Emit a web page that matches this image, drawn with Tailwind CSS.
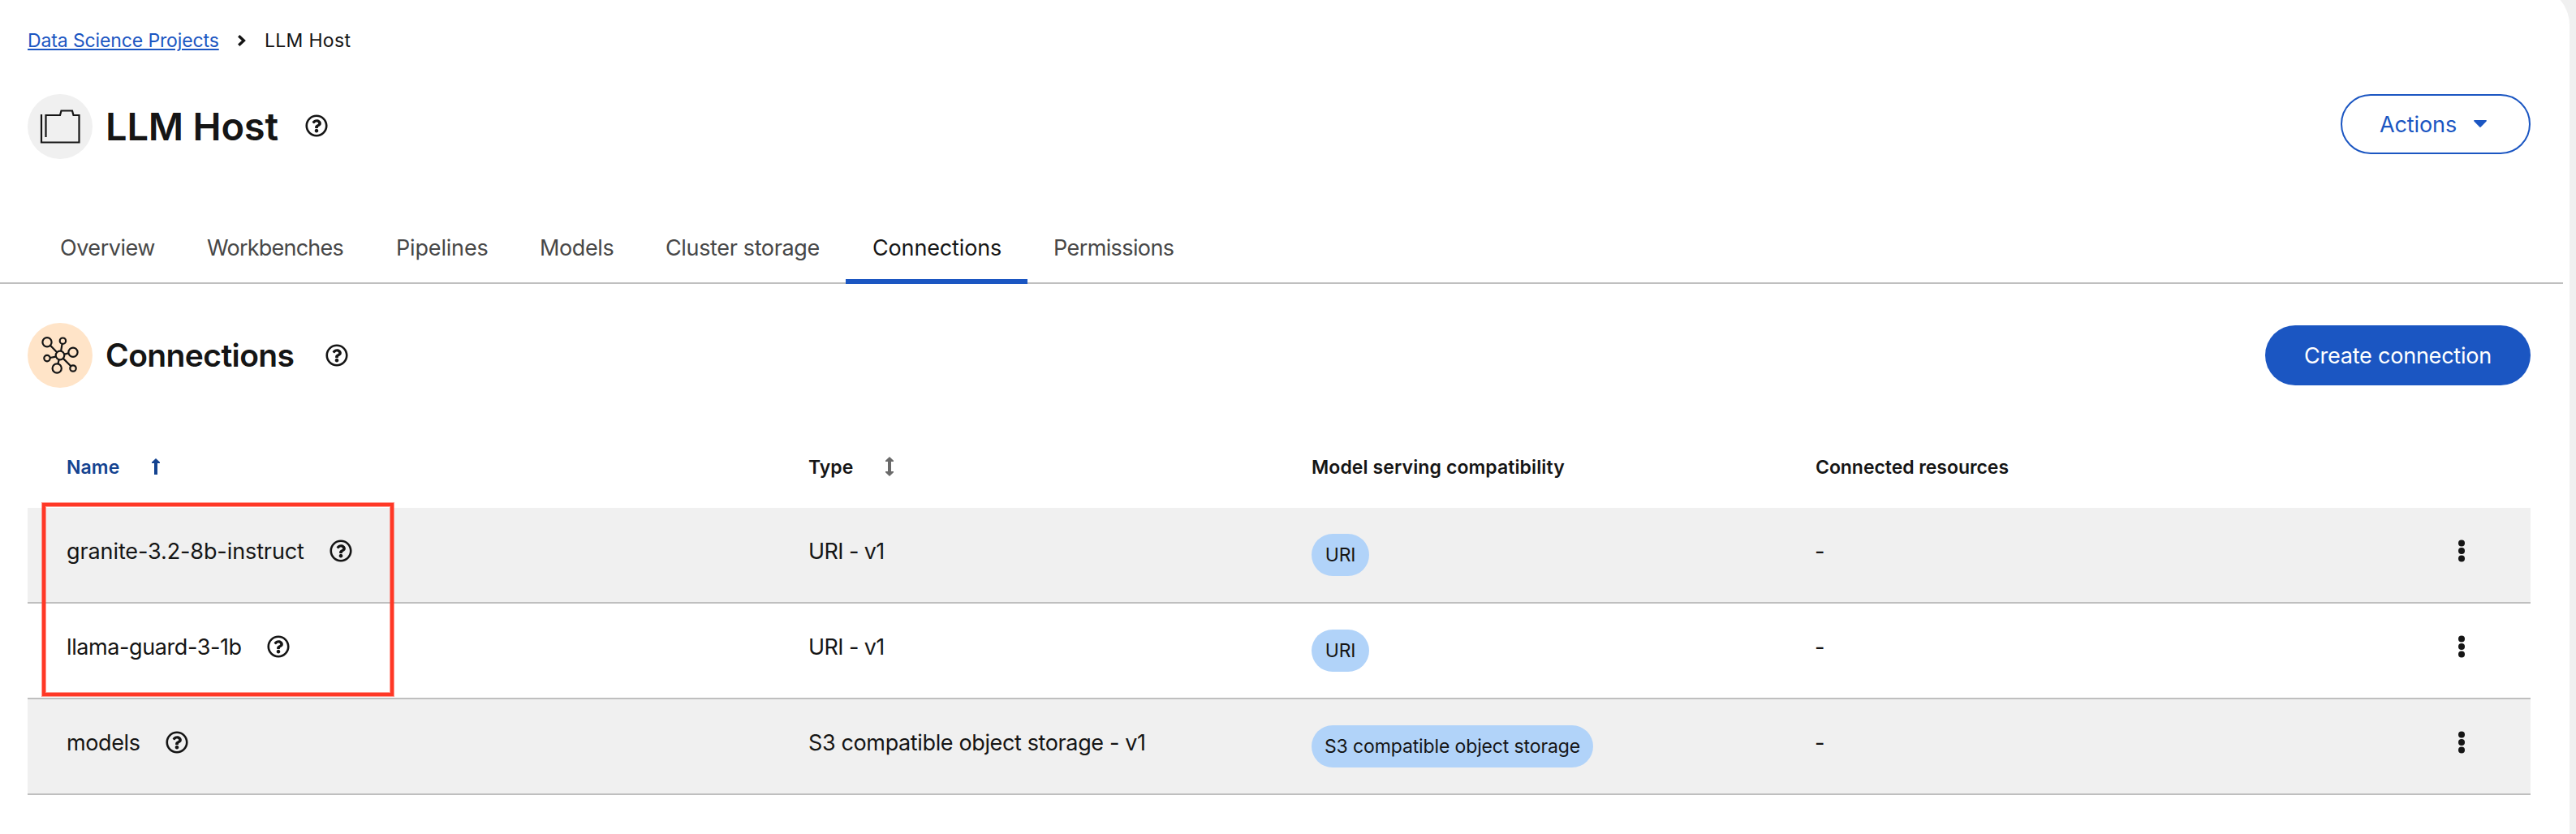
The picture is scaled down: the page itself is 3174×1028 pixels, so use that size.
<!DOCTYPE html>
<html lang="en">
<head>
<meta charset="utf-8">
<title>LLM Host - Connections</title>
<script src="https://cdn.jsdelivr.net/npm/@tailwindcss/browser@4"></script>
</head>
<body class="h-[1028px] overflow-hidden bg-[#f0f0f0] font-[Inter,sans-serif] text-[27px] text-[#151515]">
<svg class="hidden">
  <symbol id="help" viewBox="0 0 512 512"><path fill="currentColor" d="M256 8C119.043 8 8 119.083 8 256c0 136.997 111.043 248 248 248s248-111.003 248-248C504 119.083 392.957 8 256 8zm0 448c-110.532 0-200-89.431-200-200 0-110.495 89.472-200 200-200 110.491 0 200 89.471 200 200 0 110.53-89.431 200-200 200zm107.244-255.2c0 67.052-72.421 68.084-72.421 92.863V300c0 6.627-5.373 12-12 12h-45.647c-6.627 0-12-5.373-12-12v-8.659c0-35.745 27.1-50.034 47.579-61.516 17.561-9.845 28.324-16.541 28.324-29.579 0-17.246-21.999-28.693-39.784-28.693-23.189 0-33.894 10.977-48.942 29.969-4.057 5.12-11.46 6.071-16.666 2.124l-27.824-21.098c-5.107-3.872-6.251-11.066-2.644-16.363C184.846 131.491 214.94 112 261.794 112c49.071 0 101.45 38.304 101.45 88.8zM298 368c0 23.159-18.841 42-42 42s-42-18.841-42-42 18.841-42 42-42 42 18.841 42 42z"/></symbol>
  <symbol id="kebab" viewBox="0 0 8 28"><g fill="currentColor"><circle cx="4" cy="4.5" r="4"/><circle cx="4" cy="14" r="4"/><circle cx="4" cy="23.5" r="4"/></g></symbol>
</svg>
<main class="-mt-[17px] mr-2 h-[1045px] rounded-tr-[48px] bg-white pt-[17px]">
  <nav class="flex h-[68px] items-center pt-8 pl-[34px] text-[23px] whitespace-nowrap">
    <a class="w-[236px] tracking-[-0.125px] text-[#1b56c2] underline decoration-2 underline-offset-2">Data Science Projects</a>
    <svg class="ml-[22px] h-4 w-3" viewBox="0 0 12 16" fill="none" stroke="#151515" stroke-width="3.4"><path d="M2.2 2.2 8.4 8l-6.2 5.8"/></svg>
    <span class="ml-[22px] tracking-[0.3px]">LLM Host</span>
  </nav>

  <header class="mt-12 flex h-20 items-center pr-12 pl-[34px]">
    <svg class="size-20 rounded-full bg-[#f0f0f0]" viewBox="0 0 80 80" fill="none" stroke="#151515" stroke-width="2.2"><path d="M17 25V59.5H63.5V26H56.5L55 20.5H41.5L40 26H22.5V53"/></svg>
    <h1 class="ml-4 w-[246px] text-[47px] font-[570] tracking-[-0.2px] whitespace-nowrap">LLM Host</h1>
    <svg class="mb-0.5 size-7"><use href="#help"/></svg>
    <button class="ml-auto flex h-[74px] w-[234px] items-center self-start rounded-full border-2 border-[#1b56c2] pl-[46px] text-[#1b56c2]"><span class="w-[116px] pt-0.5 text-left tracking-[-0.1px]">Actions</span><svg class="h-[10px] w-4" viewBox="0 0 16 10"><path fill="currentColor" d="M.8 0h14.4q1.2.4.2 1.7L8.8 8.6q-.8.8-1.6 0L.6 1.7Q-.4.4.8 0z"/></svg></button>
  </header>

  <div class="mt-16 mr-2 flex h-[90px] items-center pl-[42px] text-[#474747] whitespace-nowrap shadow-[inset_0_-2px_0_#bfbfbf]">
    <a class="w-[181px] pt-0.5 pl-8 tracking-[-0.46px]">Overview</a>
    <a class="w-[233px] pt-0.5 pl-8 tracking-[-0.77px]">Workbenches</a>
    <a class="w-[177px] pt-0.5 pl-8 tracking-[-0.17px]">Pipelines</a>
    <a class="w-[155px] pt-0.5 pl-8 tracking-[-0.4px]">Models</a>
    <a class="w-[254px] pt-0.5 pl-8 tracking-[-0.35px]">Cluster storage</a>
    <a class="flex h-full w-[224px] items-center pt-0.5 pl-[33px] tracking-[-0.15px] text-[#151515] shadow-[inset_0_-6px_0_#1b56c2]">Connections</a>
    <a class="pt-0.5 pl-8 tracking-[-0.6px]">Permissions</a>
  </div>

  <section class="flex h-32 items-center pt-12 pr-12 pl-[34px]">
    <svg class="size-20 rounded-full bg-[#ffe4c8]" viewBox="0 0 80 80" fill="none" stroke="#151515" stroke-width="2.2"><circle cx="40" cy="40" r="5.3"/><circle cx="24" cy="23.8" r="5.6"/><circle cx="43.4" cy="22.2" r="3.7"/><circle cx="56" cy="36.3" r="5.6"/><circle cx="24" cy="43.6" r="3.7"/><circle cx="36.2" cy="56" r="5.6"/><circle cx="56" cy="56" r="3.7"/><path d="m28 27.8 8.2 8.4M42.6 26l-1.5 8.8m4.2 3.8 5.2-1.2M27.7 43l7.1-1.4m3.8 3.6-1.1 5.2m6.4-6.500 9.400 9.400"/></svg>
    <h2 class="ml-4 w-[271px] text-[39px] font-[570] tracking-[-0.6px]">Connections</h2>
    <svg class="size-7"><use href="#help"/></svg>
    <button class="ml-auto h-[74px] w-[327px] rounded-full bg-[#1b56c2] pt-0.5 tracking-[-0.22px] text-white">Create connection</button>
  </section>

  <div class="relative mt-[46px] mr-12 ml-[34px] whitespace-nowrap">
    <div class="grid h-[102px] grid-cols-[946px_620px_620px_1fr_170px] items-center text-[23px] font-semibold">
      <div class="flex items-center pl-12 text-[#144390]"><span class="w-[105px] pt-0.5 tracking-[0.1px]">Name</span><svg class="h-5 w-[10px]" viewBox="0 0 10 20"><path fill="currentColor" d="M5 0 10 4.8V6H7v14H3V6H0V4.800z"/></svg></div>
      <div class="flex items-center pl-4"><span class="w-[95px] pt-0.5">Type</span><svg class="h-6 w-[10px] text-[#6a6a6a]" viewBox="0 0 10 24"><path fill="currentColor" d="M5 0 10 4.800V6H7v12h3v1.200L5 24 0 19.200V18H3V6H0V4.800z"/></svg></div>
      <div class="pt-0.5 pl-4 tracking-[0.1px]">Model serving compatibility</div>
      <div class="pt-0.5 pl-[17px] tracking-[-0.05px]">Connected resources</div>
    </div>
    <div class="grid h-[118px] grid-cols-[946px_620px_620px_1fr_170px] items-center border-b-2 border-[#bfbfbf] bg-[#f0f0f0]">
      <div class="flex items-center pb-[10px] pl-12"><span class="w-[324px] pt-0.5 tracking-[-0.1px]">granite-3.2-8b-instruct</span><svg class="size-7"><use href="#help"/></svg></div>
      <div class="pb-2 pl-4 tracking-[-0.6px]">URI - v1</div>
      <div class="pl-4"><span class="flex h-[52px] w-[71px] items-center justify-center rounded-full bg-[#b1d3f9] text-[23px] tracking-[-0.2px]">URI</span></div>
      <div class="pb-2 pl-4">-</div>
      <svg class="mb-[10px] h-7 w-2 justify-self-center"><use href="#kebab"/></svg>
    </div>
    <div class="grid h-[118px] grid-cols-[946px_620px_620px_1fr_170px] items-center border-b-2 border-[#bfbfbf]">
      <div class="flex items-center pb-[10px] pl-12"><span class="w-[247px] pt-0.5 tracking-[-0.4px]">llama-guard-3-1b</span><svg class="size-7"><use href="#help"/></svg></div>
      <div class="pb-2 pl-4 tracking-[-0.6px]">URI - v1</div>
      <div class="pl-4"><span class="flex h-[52px] w-[71px] items-center justify-center rounded-full bg-[#b1d3f9] text-[23px] tracking-[-0.2px]">URI</span></div>
      <div class="pb-2 pl-4">-</div>
      <svg class="mb-[10px] h-7 w-2 justify-self-center"><use href="#kebab"/></svg>
    </div>
    <div class="grid h-[118px] grid-cols-[946px_620px_620px_1fr_170px] items-center border-b-2 border-[#bfbfbf] bg-[#f0f0f0]">
      <div class="flex items-center pb-[10px] pl-12"><span class="w-[122px] pt-0.5 tracking-[-0.4px]">models</span><svg class="size-7"><use href="#help"/></svg></div>
      <div class="pb-2 pl-4 tracking-[-0.37px]">S3 compatible object storage - v1</div>
      <div class="pl-4"><span class="flex h-[52px] w-[347px] items-center justify-center rounded-full bg-[#b1d3f9] text-[23px] tracking-[-0.13px]">S3 compatible object storage</span></div>
      <div class="pb-2 pl-4">-</div>
      <svg class="mb-[10px] h-7 w-2 justify-self-center"><use href="#kebab"/></svg>
    </div>
    <!-- highlight around the two model connections -->
    <div class="absolute top-[96px] left-[18px] h-[238px] w-[433px] border-4 border-[#ff3826] shadow-[0_0_0_1px_#ff382680,inset_0_0_0_1px_#ff382680]"></div>
  </div>
</main>
</body>
</html>
